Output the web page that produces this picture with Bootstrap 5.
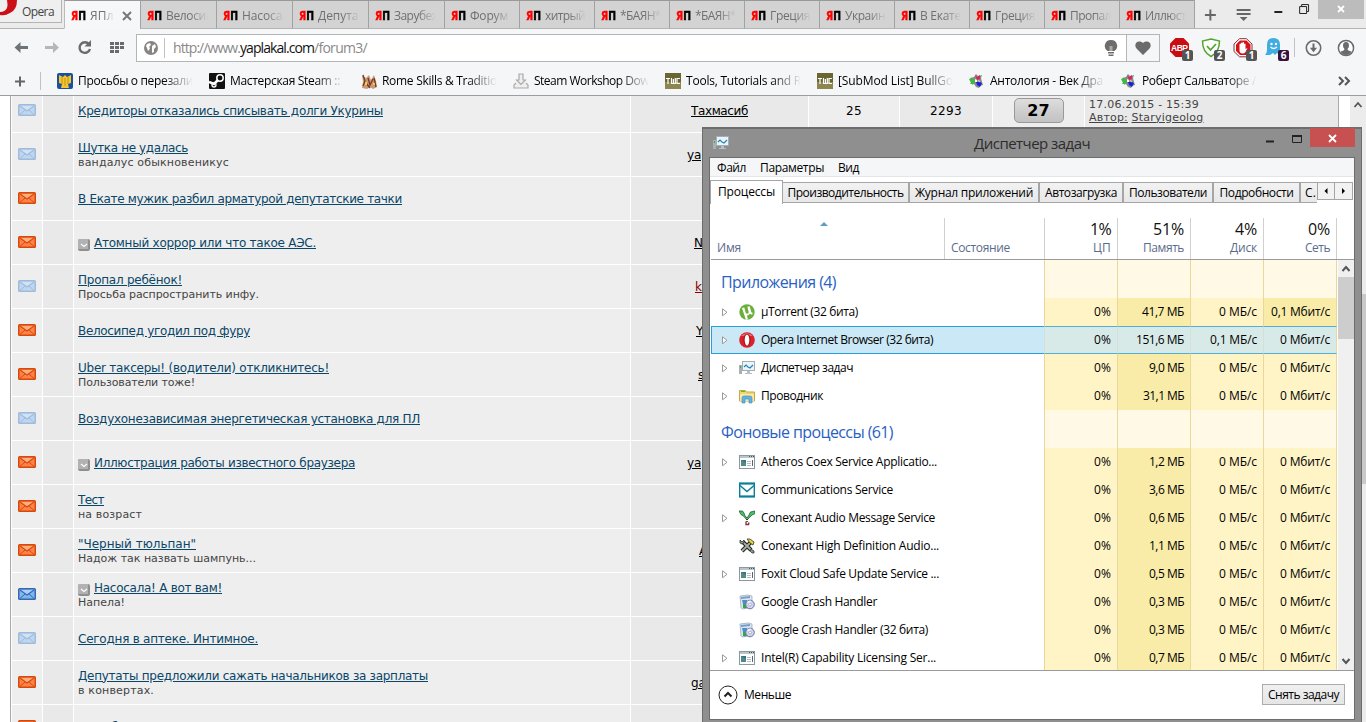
<!DOCTYPE html>
<html lang="ru">
<head>
<meta charset="utf-8">
<title>yaplakal.com</title>
<link href="https://cdn.jsdelivr.net/npm/bootstrap@5.3.0/dist/css/bootstrap.min.css" rel="stylesheet">
<style>
html,body{height:722px;overflow:hidden}
body{width:1366px;background:#fff;color:#000;font:12px/16px "Open Sans","Noto Sans",sans-serif;position:relative}
svg{display:block;flex:none}
.chrome{height:96px;background:#f5f6f8;border-bottom:1px solid #9a9e9e}
.strip{height:29px;background:#ebebeb;box-shadow:inset 0 -1px #b4b4b4}
.opera-btn{width:62px;height:23px;border:1px solid #b4b4b4;border-width:0 1px 1px 0;background:#efefef;margin-right:2px;color:#444;padding-left:22px;line-height:24px;position:relative}
.opera-btn svg{position:absolute;left:0;top:0}
.btab{width:75px;height:29px;padding:2px 8px 0 6px;border-left:1px solid #a2a2a2;border-top:1px solid #999;border-bottom:1px solid #b4b4b4;background:#d3d3d3;color:#707070;gap:4px}
.btab.wide{width:76px}
.btab.on{background:#f6f7f9;border-bottom-color:#f6f7f9;border-left-color:#bbb}
.fade-r{overflow:hidden;-webkit-mask-image:linear-gradient(90deg,#000 58%,transparent);mask-image:linear-gradient(90deg,#000 58%,transparent)}
.bm .fade-r{-webkit-mask-image:linear-gradient(90deg,#000 74%,transparent);mask-image:linear-gradient(90deg,#000 74%,transparent)}
.yp{font:bold 12px/16px "DejaVu Sans Condensed","DejaVu Sans",sans-serif;width:15px;white-space:nowrap;color:#000;flex:none}
.yp span{display:inline-block;transform:scaleX(.86);transform-origin:0 0;-webkit-text-stroke:.4px}
.yp i{color:#f00;font-style:normal}
.close-grey{width:46px;height:19px;background:#bcbcbc;margin-right:2px}
.tools{height:36px;padding-top:1px}
.addr{width:1024px;height:28px;border:1px solid #b2b6b9;background:#fff}
.heartbox{width:33px;height:26px;border-left:1px solid #b2b6b9;background:#f5f6f8}
.url{font-size:14px;color:#8a8a8a}
.url b{font-weight:400;color:#111}
.vline{width:1px;background:#c2c2c2;flex:none}
.exts{margin-left:9px;gap:8px}
.dl{margin:0 6px 0 2px}
.bmarks{height:30px;padding-top:1px}
.bm{width:152px;gap:5px}
.bm .fade-r{width:115px}
.count{position:absolute;left:13px;top:12px;width:11px;height:11px;background:#555;border-radius:2px;color:#fff;font:bold 10px/11px "Open Sans",sans-serif;text-align:center}
.count.viol{background:#36123c}
.page{height:626px;overflow:hidden;font-family:"DejaVu Sans",sans-serif}
.forum{width:1329px;margin-left:10px;border-left:1px solid #a9a9a9;border-right:1px solid #a9a9a9;padding-left:1px;background:#fff}
.trow{display:grid;grid-template-columns:30px 30px 556px 177px 90px 92px 91px 253px;column-gap:1px;height:44px;border-bottom:1px solid #fff}
.trow:first-child{margin-top:-7px}
.trow>div{background:#eee}
.trow>div:nth-child(even){background:#e9e9e9}
.trow>div:first-child{padding-bottom:2px}
.trow .one{padding-top:2px}
.ttl{font-size:12px;line-height:15px;color:#0a4668;text-decoration:underline;text-underline-offset:1px}
.sub{font-size:11px;line-height:13px;color:#444}
.who{font-size:12px;text-decoration:underline;text-underline-offset:1px;overflow:hidden;max-width:71px;line-height:17px;white-space:nowrap}
.who.rd{color:#800}
.vote{width:50px;height:25px;border:1px solid #999;border-radius:5px;background:linear-gradient(#ddd,#cfcfcf 50%,#c2c2c2);font:bold 16px/23px "DejaVu Sans",sans-serif}
.pscroll{width:16px;background:#ececec}
.pthumb{height:190px;background:#c9c9c9;margin-top:182px}
.tm{position:absolute;left:702px;top:127px;width:660px;height:595px;background:#8f8f8f;border:1px solid #6d6d6d;border-width:2px 1px 0 1px;padding:0 6px 0 6px;color:#000}
.tbar{height:28px}
.ttitle{font-size:15px;color:#2c2c2c;margin-left:245px}
.xred{width:45px;height:19px;background:#c75050;align-self:flex-start;margin-top:-1px}
.client{width:646px;height:563px;background:#fff;border:1px solid #6d6d6d}
.mbar{height:19px;background:#f5f6f7;border-bottom:1px solid #e4e6e8;padding:2px 0 0 7px;gap:14px}
.tabs{height:26px;border:0}
.ttab{height:21px;margin-top:5px;border:1px solid #a5a5a5;border-left-width:0;border-right-width:2px;background:linear-gradient(#f2f2f2,#e8e8e8);line-height:20px;text-align:center}
.ttab.on{height:24px;margin-top:3px;border-right-width:1px;border-left-width:1px;border-bottom:0;background:#fff;line-height:21px}
.sbtn{width:18px;height:18px;border:1px solid #a5a5a5;background:#f2f2f2;margin-top:5px}
.thead{height:57px;border-bottom:1px solid #9a9a9a;margin-left:1px}
.tgrid{display:grid;grid-template-columns:234px 100px 73px 73px 73px 73px 17px}
.thead>div{border-right:1px solid #d0d0d0;margin-top:15px;color:#5b6b8c;padding:0 6px}
.thead>div:last-child{border:0}
.pct{font-size:16px;line-height:22px;color:#111}
.tbody{height:410px;overflow:hidden;margin-left:1px}
.prow{display:grid;grid-template-columns:333px repeat(3,73px) 74px;height:28px;line-height:28px}
.prow>div+div{border-left:1px solid #ebd69c;background:#fff4c6;padding-right:6px;text-align:right}
.prow>div:last-child{border-right:1px solid #ebd69c}
.prow>div.hot{background:#f9eca8}
.prow.grp{height:38px}
.prow.grp>div+div{background:#fff9e5}
.gname{font-size:16px;line-height:44px;color:#2a5fc4;padding-left:10px}
.prow.sel>div{background:#cbe8f6;border-top:1px solid #26a0da;border-bottom:1px solid #26a0da;line-height:26px}
.prow.sel>div:first-child{border-left:1px solid #26a0da}
.prow.sel>div+div{background:#d8eae8;border-left-color:#d5dfdb;border-top-color:#50b0d4;border-bottom-color:#50b0d4}
.exp{width:28px;padding-left:11px}
.prow.sel .exp{width:27px;padding-left:10px}
.tscroll{width:16px;background:#f0f0f0}
.tthumb{height:62px;background:#cdcdcd}
.tfoot{border-top:1px solid #9a9a9a;height:48px}
.endbtn{width:83px;height:21px;border:1px solid #acacac;background:linear-gradient(#f0f0f0,#e5e5e5);border-radius:0;padding:0;font-size:12px;line-height:19px;color:#000}
.fit{white-space:nowrap;display:inline-block}
</style>
</head>
<body>
<svg width="0" height="0" class="position-absolute">
<defs>
<symbol id="win" viewBox="0 0 16 14"><rect x=".5" y=".5" width="15" height="13" fill="#fff" stroke="#8e989c"/><path d="M1 1h14v2H1z" fill="#b9c6cb"/><path d="M10 1.500h1M12 1.500h1M14 1.500h1" stroke="#456"/><path d="M2 5h5v6H2z" fill="#4e8c86"/><path d="M2 5h5v3z" fill="#3f6d86"/><path d="M8 6.500h4M8 8.500h4M8 10.500h4" stroke="#b3bcbc"/><path d="M13 5h1v6h-1z" fill="#567"/></symbol>
<symbol id="crash" viewBox="0 0 16 16"><path d="M1 2l8-1 4 1v11l-9 2-2-1z" fill="#dfe6ef" stroke="#93a0b0" stroke-width=".7"/><path d="M2 3l9-1v2l-9 1z" fill="#6f9fd0"/><path d="M3 6h5v8l-3 .5z" fill="#4c8ec9"/><path d="M4 10h3v4H4z" fill="#2fa84a"/><circle cx="11" cy="10.500" r="4.300" fill="#cfd3ef" stroke="#6d7496"/><path d="M11 10.500L8 8a4 4 0 0 1 4-1.500z" fill="#f1f4ff"/><circle cx="11" cy="10.500" r="1.400" fill="#fff" stroke="#8890b5" stroke-width=".6"/></symbol>
<symbol id="mon" viewBox="0 0 16 14"><path d="M0 4h3v9H0z" fill="#a9b0b2"/><path d="M1 5h1v2H1z" fill="#3fae49"/><rect x="3.500" y=".5" width="12" height="9" fill="#e9f5fb" stroke="#a4adb2"/><path d="M5 6l2-2 2 2 2 1 3-3" fill="none" stroke="#2a83b5" stroke-width="1.200"/><path d="M8 10h3v2h2v1H6v-1h2z" fill="#b8bfc2"/></symbol>
<symbol id="fold" viewBox="0 0 16 14"><path d="M.5 1.500h6l1 1.500h8V12H.5z" fill="#f3d774" stroke="#c9a544"/><path d="M2 2.500h4" stroke="#3c3"/><path d="M1 5h14v7H1z" fill="#fbe9a0"/><path d="M3 14V9q0-2 2-2h6q2 0 2 2v5h-3v-4H6v4z" fill="#62b3e4" stroke="#3a8cc4" stroke-width=".6"/></symbol>
<symbol id="ut" viewBox="0 0 16 16"><circle cx="8" cy="8" r="7.700" fill="#6cae3c"/><path d="M3 4l2.300-.6L6.600 8.400q.7 1.800 2.300 1.200 1-.5.700-1.900L8.400 2.800l2.300-.6 1.500 5.600q.4 1 1.500.8l-.3 1.800q-1.800.3-2.700-.6-.8 1.700-2.700 1.700l.9 4-2 .2z" fill="#fff"/></symbol>
<symbol id="op" viewBox="0 0 16 16"><circle cx="8" cy="8" r="7.800" fill="#d9222b"/><path d="M2 4a7.800 7.800 0 0 1 12 0z" fill="#ee6a6a"/><ellipse cx="8" cy="8" rx="3.600" ry="6.300" fill="#b0131b"/><ellipse cx="8" cy="8" rx="2.300" ry="5.500" fill="#fff"/></symbol>
<symbol id="com" viewBox="0 0 16 15"><rect x=".7" y="1" width="14.600" height="13" fill="#fff" stroke="#0a7f97" stroke-width="1.400"/><path d="M0 0h16v2H0zM0 13h16v2H0z" fill="#0a7f97"/><path d="M1 3l7 6 7-6" fill="none" stroke="#0a7f97" stroke-width="1.500"/></symbol>
<symbol id="con" viewBox="0 0 16 16"><path d="M0 1h3.500l1.500 2 .5 2L8 8l2-3 1.500-3L16 1v2.500L13 5l-3 3-1.500 1.500h-1L4.500 6 2 4.500z" fill="#4cc06c" stroke="#1d5c30" stroke-width=".8"/><path d="M8 9v3" stroke="#222" stroke-width="1.500" stroke-dasharray="1 1"/><path d="M7 11.500v3h2.500l.5-2" fill="none" stroke="#8a2a3c" stroke-width="1.300"/></symbol>
<symbol id="tool" viewBox="0 0 16 16"><path d="M3 13L12 4M4 4l8 8" stroke="#222" stroke-width="4"/><path d="M3 13L11 5M4 4l8 8" stroke="#a7b0a0" stroke-width="1.800"/><path d="M8 1l3 0 4 3-1 3-3-2z" fill="#e9d331" stroke="#333" stroke-width=".8"/><path d="M1 2l2 2 2-2v3L3 6 1 5zM12 11l3 2v2h-2l-2-2z" fill="#8b9c86" stroke="#222" stroke-width=".7"/></symbol>
<symbol id="dn" viewBox="0 0 12 12"><rect width="12" height="12" rx="2" fill="#8f8f8f"/><path d="M0 2q0-2 2-2h8v10H1q-1 0-1-1z" fill="#b2b2b2"/><path d="M3 5l3 2.500L9 5" fill="none" stroke="#fff" stroke-width="1.200"/></symbol>
<symbol id="star" viewBox="0 0 16 16"><path d="M7 1l2 2 4-1-1 3 1 4 1 3-3 1-1 2-3-1-2-3-4 0 2-3-2-3 4-1z" fill="#8a8a8a"/><path d="M6 2l2 2 3-2v4l-3 1z" fill="#d4285c"/><path d="M0 6l3-1 3 3-2 4-2-2z" fill="#39bd3d"/><path d="M7 9l3 0 3 1-2 4-3-2z" fill="#1722d5"/><path d="M6 6l2 1 0 2-2 0zM9 7l2 1-1 1z" fill="#fff"/></symbol>
<symbol id="twc" viewBox="0 0 16 16"><path d="M0 0h16v16H0z" fill="#6b6532"/><path d="M0 9h16v7H0z" fill="#8d8650"/><path d="M1 5.500h4M3 5.500V11M6.500 5v5.500h3.800V5M8.400 6v4M15 5.500h-3v5h3" fill="none" stroke="#fff" stroke-width="1.200"/></symbol>
</defs></svg>

<header class="chrome">
  <div class="strip d-flex" id="strip">
    <div class="opera-btn"><svg width="18" height="16"><path d="M7 0h10q0 10-7 13-5 3-10 2v-3q5 0 7-4 1-3 0-8z" fill="#cc0f16"/></svg><span class="fit" data-w="32">Opera</span></div>
  </div>
  <div class="tools d-flex align-items-center">
    <svg width="136" height="26" viewBox="0 0 136 26"><path d="M14.500 12.500l6-5.500v4h7.500v3h-7.500v4z" fill="#6e7378"/><path d="M59 12.500L53 7v4h-8v3h8v4z" fill="#b4b6b8"/><path d="M89 9.200a5.300 5.300 0 1 0 1 4.800" fill="none" stroke="#6b6b6b" stroke-width="2.400"/><path d="M91 5v6.500h-6.500z" fill="#6b6b6b"/><path d="M110 7h4v3h-4zm5 0h4v3h-4zm5 0h4v3h-4zm-10 4h4v3h-4zm5 0h4v3h-4zm5 0h4v3h-4zm-10 4h4v3h-4zm5 0h4v3h-4z" fill="#6b6b6b"/></svg>
    <div class="addr d-flex align-items-center">
      <svg width="27" height="18" viewBox="0 0 27 18"><circle cx="14" cy="9" r="7" fill="#858585"/><path d="M10 5l3-1 1 2-2 2 1 1-1 2-1 1-1-3-1-2zm5 2l3-2 1 3-2 2 0 3-2 1 0-4z" fill="#fff"/></svg>
      <div class="vline" style="height:20px"></div>
      <div class="url ms-2"><span class="fit" data-w="67">http://www.</span><b class="fit" data-w="74">yaplakal.com</b><span class="fit" data-w="53">/forum3/</span></div>
      <svg class="ms-auto me-2" width="14" height="18" viewBox="0 0 14 18"><path d="M7 1a6 6 0 0 1 3.500 11h-7A6 6 0 0 1 7 1z" fill="#6d6d6d"/><path d="M5.500 7h3v5h-3z" fill="#aaa"/><path d="M4 13h6v1.500H4zM4.500 15.500h5V17h-5z" fill="#6d6d6d"/></svg>
      <div class="heartbox d-flex align-items-center justify-content-center"><svg width="18" height="16" viewBox="0 0 18 16"><path d="M9 15L2.500 8.500C-1 4 4-1 9 3c5-4 10 1 6.500 5.500z" fill="#6b6b6b"/></svg></div>
    </div>
    <div class="exts d-flex align-items-center">
      <div class="position-relative" style="width:24px"><svg width="24" height="20" viewBox="0 0 24 20"><path d="M6.500 0h8l5.500 5.500v8L14.500 19h-8L1 13.500v-8z" fill="#c90d12"/><text x="2" y="12.500" font-family="Liberation Sans" font-size="8.500" font-weight="700" fill="#fff" textLength="17">ABP</text></svg><span class="count">1</span></div>
      <div class="position-relative" style="width:24px"><svg width="24" height="20" viewBox="0 0 24 20"><path d="M10 1l8.500 2q0 11-8.500 15.500Q1.500 14 1.500 3z" fill="#fff" stroke="#55a630" stroke-width="1.500"/><path d="M6 8l3.500 4L15 6" fill="none" stroke="#55a630" stroke-width="1.800"/></svg><span class="count">2</span></div>
      <div class="position-relative" style="width:24px"><svg width="24" height="20" viewBox="0 0 24 20"><path d="M6.500.7h7L19 6v7.500l-5.500 5.300h-7L1 13.500V6z" fill="#fff" stroke="#8a3030" stroke-width="1"/><path d="M7 2.500h6.500L17.500 6.500v6.500L13.500 17H7L3 13V6.500z" fill="#d5121a"/><path d="M6.500 9V6q1-1 1.500 0V5q1-1 1.500 0V4.500q1-1 1.500 0V6q1-1 1.500 0v5l2-1-2 4q-1 1.500-3 1.500-3 0-3-3z" fill="#fff"/></svg><span class="count">1</span></div>
      <div class="position-relative" style="width:21px"><svg width="21" height="20" viewBox="0 0 21 20"><path d="M2 7q0-7 6.500-7T15 7v6l-1 3-2-1-2 2-2-2-3 2H0q2-2 2-5z" fill="#3fade0"/><circle cx="6.500" cy="6" r="1.200" fill="#fff"/><circle cx="11" cy="6" r="1.200" fill="#fff"/><path d="M5.500 9q3 3 6.500 0" fill="none" stroke="#fff" stroke-width="1.200"/></svg><span class="count viol">6</span></div>
      <div class="vline" style="height:19px"></div>
      <svg width="18" height="18" viewBox="0 0 18 18" class="dl"><circle cx="8.500" cy="9" r="7.200" fill="none" stroke="#6b6b6b" stroke-width="1.600"/><path d="M7.500 4.500h2v4.300h2.600l-3.600 4.500-3.600-4.500h2.600z" fill="#6b6b6b"/></svg>
      <svg width="18" height="18" viewBox="0 0 18 18"><circle cx="9" cy="9" r="7.600" fill="#fff" stroke="#6b6b6b" stroke-width="1.500"/><path d="M9 3q3 0 3 3.500 0 2-1.500 3.500 0 1.500 4 2.500-2 3.500-5.500 3.500T3.500 12.500q4-1 4-2.500Q6 8.500 6 6.500 6 3 9 3z" fill="#6b6b6b"/></svg>
    </div>
  </div>
  <div class="bmarks d-flex align-items-center" id="bmarks">
    <svg width="57" height="20" viewBox="0 0 57 20"><path d="M15 10.500h10M20 5.500v10" stroke="#666" stroke-width="2"/><path d="M40.500 1v18" stroke="#c2c2c2"/></svg>
  </div>
</header>

<main class="page d-flex">
  <div class="forum" id="forum"></div>
  <div class="pscroll ms-auto"><svg width="16" height="16"><path d="M4.500 11l3.500-4 3.500 4" fill="none" stroke="#555" stroke-width="1.800"/></svg><div class="pthumb"></div></div>
</main>

<section class="tm">
  <div class="tbar d-flex align-items-center">
    <svg width="16" height="14" class="ms-1"><use href="#mon"/></svg>
    <div class="ttitle"><span class="fit" data-w="116">Диспетчер задач</span></div>
    <svg width="50" height="20" class="ms-auto" viewBox="0 0 50 20"><path d="M5 8.500h8" stroke="#222" stroke-width="2" transform="translate(1)"/><path d="M32.500 2.500h9v7h-9z" fill="none" stroke="#222"/><path d="M32 3h10" stroke="#222" stroke-width="2"/></svg>
    <div class="xred"><svg width="45" height="20"><path d="M19 7l7 7M26 7l-7 7" stroke="#fff" stroke-width="1.800"/></svg></div>
  </div>
  <div class="client">
    <div class="mbar d-flex align-items-center"><span class="fit" data-w="29">Файл</span><span class="fit" data-w="64">Параметры</span><span class="fit" data-w="21">Вид</span></div>
    <div class="tabs d-flex" id="ttabs"></div>
    <div class="thead tgrid">
      <div><svg width="8" height="5" style="margin:4px 0 13px 103px"><path d="M0 4l4-4 4 4z" fill="#5d9dbd"/></svg><span class="fit" data-w="24">Имя</span></div>
      <div style="padding-top:22px"><span class="fit" data-w="59">Состояние</span></div>
      <div class="text-end"><div class="pct"><span class="fit" data-w="21">1%</span></div><span class="fit" data-w="18">ЦП</span></div>
      <div class="text-end"><div class="pct"><span class="fit" data-w="31">51%</span></div><span class="fit" data-w="41">Память</span></div>
      <div class="text-end"><div class="pct"><span class="fit" data-w="22">4%</span></div><span class="fit" data-w="27">Диск</span></div>
      <div class="text-end"><div class="pct"><span class="fit" data-w="22">0%</span></div><span class="fit" data-w="25">Сеть</span></div>
      <div></div>
    </div>
    <div class="tbody d-flex justify-content-between">
      <div id="procs"></div>
      <div class="tscroll d-flex flex-column"><svg width="16" height="17"><path d="M4.500 11l3.500-4 3.500 4" fill="none" stroke="#555" stroke-width="2"/></svg><div class="tthumb"></div><svg width="16" height="17" class="mt-auto"><path d="M4.500 6l3.500 4 3.500-4" fill="none" stroke="#555" stroke-width="2"/></svg></div>
    </div>
    <div class="tfoot d-flex align-items-center">
      <svg width="20" height="20" viewBox="0 0 20 20" style="margin-left:8px"><circle cx="10" cy="10" r="9" fill="#fff" stroke="#222"/><path d="M6.500 11.500L10 8l3.500 3.500" fill="none" stroke="#222" stroke-width="2"/></svg>
      <span class="fit" data-w="47" style="margin-left:6px">Меньше</span>
      <button class="btn endbtn ms-auto" style="margin-right:9px"><span class="fit" data-w="71">Снять задачу</span></button>
    </div>
  </div>
</section>

<script src="https://cdn.jsdelivr.net/npm/bootstrap@5.3.0/dist/js/bootstrap.bundle.min.js"></script>
<script>
const fit=(t,w,c='')=>`<span class="fit ${c}" ${w?`data-w="${w}"`:''}>${t}</span>`;
const add=(id,h)=>document.getElementById(id).insertAdjacentHTML('beforeend',h);

// Browser tabs
const tabs=[['ЯПл',24],['Велосип',47],['Насосал',47],['Депутат',46],['Зарубеж',46],['Форум',38],['хитрый',40],['*БАЯН*',41],['*БАЯН*',41],['Греция',40],['Украин',40],['В Екате',41],['Греция',40],['Пропал',41],['Иллюст',41]];
add('strip',tabs.map(([t,w],i)=>`<div class="btab d-flex align-items-center ${i<5?'wide':''} ${i?'':'on'}"><div class="yp"><span><i>Я</i>П</span></div><div class="fade-r" style="width:${i?42:25}px">${fit(t,w)}</div>${i?'':'<svg width="10" height="10" class="ms-1"><path d="M1 1l8 8M9 1L1 9" stroke="#777" stroke-width="2"/></svg>'}</div>`).join('')
+`<svg width="124" height="28" viewBox="0 0 124 28" style="border-left:1px solid #a2a2a2"><path d="M10 15h11M15.500 9.500v11" stroke="#666" stroke-width="2"/><path d="M42 10h14M42 14h14" stroke="#666" stroke-width="2"/><path d="M45 17h8l-4 4z" fill="#666"/><path d="M80 12h8" stroke="#222" stroke-width="2"/><path d="M105.500 6.500h7v7h-7zM107.500 6V4.500h7v7H113" fill="none" stroke="#222"/></svg><div class="close-grey ms-auto"><svg width="46" height="19"><path d="M20 6l6 6M26 6l-6 6" stroke="#fff" stroke-width="1.800"/></svg></div>`);

// Bookmarks bar
const ic={
 eagle:'<svg width="16" height="16"><rect width="16" height="16" rx="2" fill="#1d4fa0"/><path d="M2 2l4 2 2-2 2 2 4-2 0 8-3 1 1 4H4l1-4-3-1z" fill="#f2c62c"/><path d="M5 4v7M11 4v7M8 5v8" fill="none" stroke="#c2901a"/></svg>',
 steam:'<svg width="16" height="16"><rect width="16" height="16" rx="1" fill="#111"/><circle cx="11" cy="5" r="3.200" fill="none" stroke="#fff" stroke-width="1.500"/><path d="M9 7l-4 4-5-2" fill="none" stroke="#fff" stroke-width="2.500"/><circle cx="5" cy="12" r="2" fill="none" stroke="#fff" stroke-width="1.300"/></svg>',
 rome:'<svg width="16" height="16"><path d="M1 2l4 3 3-3 2 5 3-5 2 6 1 6-4 2-3-2-3 2-5-1 1-6z" fill="#c89a7a"/><path d="M2 2l2 6-2 5M7 5l2 7 3-6M13 5l2 9M5 10l4 5" stroke="#7a3520" stroke-width="1.300" fill="none"/><path d="M4 9h2v3H4zM12 10h2v2h-2z" fill="#e8d038"/></svg>',
 down:'<svg width="16" height="16"><path d="M6 1h4v6h2.500L8 11.500 3.500 7H6zM3 10l-2 2v3h14v-3l-2-2" fill="#eee" stroke="#aaa" stroke-width="1.200"/></svg>',
 twc:'<svg width="16" height="16"><use href="#twc"/></svg>',
 star:'<svg width="16" height="16"><use href="#star"/></svg>'};
const bms=[['eagle','Просьбы о перезали',115],['steam','Мастерская Steam ::',110],['rome','Rome Skills &amp; Traditio',115],['down','Steam Workshop Dow',115],['twc','Tools, Tutorials and R',115],['twc','[SubMod List] BullGo',115],['star','Антология - Век Дра',113],['star','Роберт Сальваторе /',114]];
add('bmarks',bms.map(([i,t,w])=>`<div class="bm d-flex align-items-center">${ic[i]}<div class="fade-r">${fit(t,w)}</div></div>`).join('')+'<svg width="14" height="12" class="ms-auto" style="margin-right:15px"><path d="M2 2l4 4-4 4M8 2l4 4-4 4" fill="none" stroke="#555" stroke-width="2"/></svg>');

// Forum topics: envelope, title, width, subtitle, width, author start, arrow
const env={o:['#ff8348','#d8480a','#ffd2b0'],l:['#bcd8f0','#a3b9dc','#dcecf8'],b:['#7db8ec','#3a66b8','#d0e6fa']};
const mail=k=>{const[f,s,h]=env[k];return `<svg width="18" height="12"><rect x=".75" y=".75" width="16.500" height="10.500" rx=".8" fill="${f}" stroke="${s}" stroke-width="1.500"/><path d="M2 2l7 5 7-5" fill="${h}" fill-opacity=".55" stroke="${s}" stroke-width="1.100"/><path d="M2 10.500L7 6M16 10.500L11 6" stroke="${s}"/></svg>`};
const topics=[
['l','Кредиторы отказались списывать долги Укурины',305],
['l','Шутка не удалась',110,'вандалус обыкновеникус',151,'ya',56],
['o','В Екате мужик разбил арматурой депутатские тачки',324],
['o','Атомный хоррор или что такое АЭС.',222,'',0,'N',63,1],
['l','Пропал ребёнок!',104,'Просьба распространить инфу.',181,'k',64,0,1],
['o','Велосипед угодил под фуру',172,'',0,'Y',65],
['o','Uber таксеры! (водители) откликнитесь!',251,'Пользователи тоже!',117,'s',67],
['l','Воздухонезависимая энергетическая установка для ПЛ',342],
['o','Иллюстрация работы известного браузера',261,'',0,'ya',56,1],
['o','Тест',26,'на возраст',64],
['o','"Черный тюльпан"',118,'Надож так назвать шампунь...',178,'A',68],
['b','Насосала! А вот вам!',128,'Напела!',47,'',0,1],
['l','Сегодня в аптеке. Интимное.',180],
['o','Депутаты предложили сажать начальников за зарплаты',350,'в конвертах.',76,'ga',60],
['o','Колобок',56]];
const cell='<div class="d-flex align-items-center justify-content-center">';
add('forum',topics.map(([m,t,w,s,sw,a,x,d,r],i)=>`<div class="trow">${cell}${mail(m)}</div><div></div><div class="d-flex flex-column justify-content-center ${s?'':'one'}" style="padding-left:4px"><div class="d-flex align-items-center">${d?'<svg width="12" height="12" style="margin:3px 4px 0 0"><use href="#dn"/></svg>':''}${fit(t,w,'ttl')}</div>${s?`<div class="sub">${fit(s,sw)}</div>`:''}</div>`
+(i?`<div class="d-flex align-items-center one">${a?`<span class="who ${r?'rd':''}" style="padding-left:${x}px">${a}</span>`:''}</div><div></div><div></div><div></div><div></div></div>`
:`<div class="d-flex align-items-center justify-content-center one">${fit('Тахмасиб',57,'who')}</div>${cell}${fit('25',16)}</div>${cell}${fit('2293',32)}</div>${cell}<div class="vote text-center">27</div></div><div class="d-flex flex-column justify-content-center sub" style="padding-left:4px"><div>${fit('17.06.2015 - 15:39',110)}</div><div>${fit('<u>Автор:</u>',39)} ${fit('<u>Staryigeolog</u>',72)}</div></div></div>`)).join(''));

// Task manager tabs
const tt=[['Процессы',73,57],['Производительность',127,116],['Журнал приложений',130,118],['Автозагрузка',84,72],['Пользователи',90,78],['Подробности',87,74]];
add('ttabs',tt.map(([t,b,w],i)=>`<div class="ttab ${i?'':'on'}" style="width:${b}px">${fit(t,w)}</div>`).join('')+`<div class="ttab text-start ps-1 overflow-hidden border-end-0" style="width:16px">${fit('С.',11)}</div><div class="sbtn"><svg width="16" height="16"><path d="M9.500 5v6l-3-3z"/></svg></div><div class="sbtn border-start-0"><svg width="16" height="16"><path d="M7 5v6l3-3z"/></svg></div>`);

// Processes: icon, expandable, name, width, memory, disk, network
const procs=[['Приложения (4)',115],
['ut',1,'µTorrent (32 бита)',97,'41,7 МБ','0 МБ/с','0,1 Мбит/с'],
['op',1,'Opera Internet Browser (32 бита)',172,'151,6 МБ','0,1 МБ/с','0 Мбит/с'],
['mon',1,'Диспетчер задач',92,'9,0 МБ'],['fold',1,'Проводник',62,'31,1 МБ'],
['Фоновые процессы (61)',172],
['win',1,'Atheros Coex Service Applicatio...',176,'1,2 МБ'],['com',0,'Communications Service',132,'3,6 МБ'],
['con',1,'Conexant Audio Message Service',174,'0,6 МБ'],['tool',0,'Conexant High Definition Audio...',178,'1,1 МБ'],
['win',1,'Foxit Cloud Safe Update Service ...',178,'0,5 МБ'],['crash',0,'Google Crash Handler',116,'0,3 МБ'],
['crash',0,'Google Crash Handler (32 бита)',167,'0,3 МБ'],['win',1,'Intel(R) Capability Licensing Ser...',175,'0,7 МБ']];
const mw={'41,7 МБ':42,'151,6 МБ':48,'31,1 МБ':41};
add('procs',procs.map(p=>{
 if(p.length==2)return `<div class="prow grp"><div class="gname">${fit(p[0],p[1])}</div><div></div><div></div><div></div><div></div></div>`;
 const[i,e,n,w,m,d='0 МБ/с',k='0 Мбит/с']=p;
 return `<div class="prow ${i=='op'?'sel':''}"><div class="d-flex align-items-center"><div class="exp">${e?'<svg width="6" height="9"><path d="M.5 .8v7l4.500-3.500z" fill="#fff" stroke="#999"/></svg>':''}</div><svg width="16" height="16" style="margin-right:6px"><use href="#${i}"/></svg>${fit(n,w)}</div><div>${fit('0%',17)}</div><div class="hot">${fit(m,mw[m]||35)}</div><div>${fit(d,d[1]==','?47:38)}</div><div class="${k[1]==','?'hot':''}">${fit(k,k[1]==','?59:50)}</div></div>`}).join(''));

// Tracking: spread or tighten each label to its nominal width
document.querySelectorAll('.fit[data-w]').forEach(e=>{const n=e.textContent.length;e.style.letterSpacing=((+e.dataset.w-e.getBoundingClientRect().width)/n).toFixed(3)+'px'});
</script>
</body>
</html>
